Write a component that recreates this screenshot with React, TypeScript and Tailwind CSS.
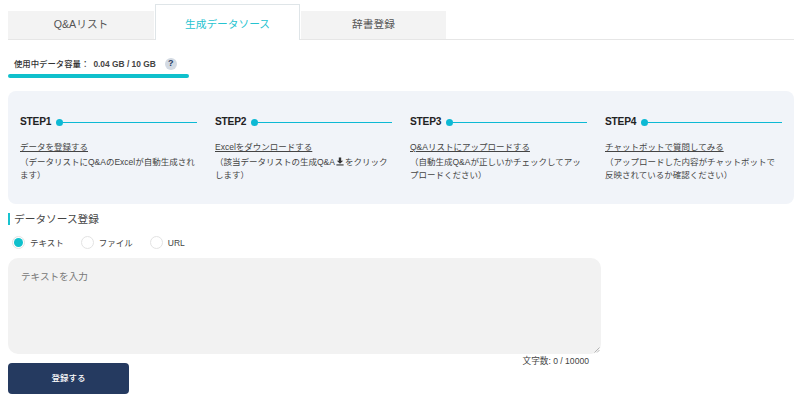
import React from "react";

const steps = [
  { n: "STEP1", t: "データを登録する", d: <>（データリストにQ&AのExcelが自動生成されます）</> },
  {
    n: "STEP2",
    t: "Excelをダウンロードする",
    d: (
      <>
        （該当データリストの生成Q&A
        <svg viewBox="0 0 10 10" className="inline-block w-[8px] h-[9px] align-[-1px] mx-px" fill="#333">
          <path d="M3.5 0h3v4h2.5L5 7.8 1 4h2.5z" />
          <rect x="0.5" y="8.6" width="9" height="1.4" />
        </svg>
        をクリックします）
      </>
    ),
  },
  { n: "STEP3", t: "Q&Aリストにアップロードする", d: <>（自動生成Q&Aが正しいかチェックしてアップロードください）</> },
  { n: "STEP4", t: "チャットボットで質問してみる", d: <>（アップロードした内容がチャットボットで反映されているか確認ください）</> },
];

function Radio({ label, checked }: { label: string; checked?: boolean }) {
  return (
    <div className="flex items-center gap-[5px]">
      <span className="w-[13px] h-[13px] rounded-full border border-[#e3e3e3] bg-white flex items-center justify-center shrink-0">
        {checked && <span className="w-[9px] h-[9px] rounded-full bg-[#0fc0cc]" />}
      </span>
      <span className="text-[8.5px] leading-[12px] text-[#444]">{label}</span>
    </div>
  );
}

export default function App() {
  return (
    <div
      className="w-[800px] h-[401px] overflow-hidden bg-white text-[#333] px-[8px]"
      style={{ fontFamily: '"Liberation Sans", "Noto Sans CJK JP", sans-serif' }}
    >
      <div className="w-[786px] h-[40px] flex items-end border-b border-[#e6e6e6]">
        <div className="w-[146px] h-[28px] pb-[2px] bg-[#f3f3f3] flex items-center justify-center text-[10.7px] text-[#555]">Q&Aリスト</div>
        <div className="w-[145px] h-[36px] pt-[4px] ml-px bg-white border border-[#dfe5e8] border-b-0 flex items-center justify-center text-[10.7px] text-[#26c3d0] -mb-px">生成データソース</div>
        <div className="w-[145px] h-[28px] pb-[2px] ml-px bg-[#f3f3f3] flex items-center justify-center text-[10.7px] text-[#555]">辞書登録</div>
      </div>

      <div className="w-[181px] mt-[14px] h-[24px] relative">
        <div className="flex items-center h-[20px] pl-[6px] text-[8.4px] font-medium text-[#333]">
          <span>使用中データ容量：</span>
          <span className="ml-[4px] font-bold text-[#444]">0.04 GB / 10 GB</span>
          <span className="ml-[9px] w-[12px] h-[12px] rounded-full bg-[#d3dae3] flex items-center justify-center text-[9px] font-bold text-[#2a3f66]">?</span>
        </div>
        <div className="absolute left-0 bottom-0 w-[181px] h-[4px] rounded-full bg-[#0fc0cc]" />
      </div>

      <div className="w-[786px] h-[113px] mt-[13px] rounded-[8px] bg-[#f1f4f9] pl-[12px] pt-[23px] grid grid-cols-[repeat(4,177px)] gap-x-[18px] content-start">
        {steps.map((s) => (
          <div key={s.n}>
            <div className="flex items-center h-[16px]">
              <span className="text-[10.2px] font-bold text-[#222] tracking-[-0.2px]">{s.n}</span>
              <span className="w-[7px] h-[7px] ml-[5px] rounded-full bg-[#0db9d4] shrink-0" />
              <span className="h-px flex-1 bg-[#0db9d4]" />
            </div>
            <div className="mt-[10px] text-[8.5px] leading-[14px] underline text-[#444]">{s.t}</div>
            <p className="mt-[2px] text-[8.5px] leading-[13px] text-[#444]">{s.d}</p>
          </div>
        ))}
      </div>

      <div className="mt-[8px] flex items-center h-[14px]">
        <span className="w-[2px] h-[12px] bg-[#18c3cf]" />
        <span className="ml-[4px] text-[10.7px] text-[#444]">データソース登録</span>
      </div>

      <div className="mt-[10px] pl-[4px] flex gap-[17px] h-[13px] items-center">
        <Radio label="テキスト" checked />
        <Radio label="ファイル" />
        <Radio label="URL" />
      </div>

      <div className="relative mt-[9px] w-[593px] h-[96px] rounded-[10px] bg-[#f2f2f2] px-[13px] py-[12px] text-[9.6px] leading-[14px] text-[#777]">
        テキストを入力
        <svg viewBox="0 0 6 6" className="absolute right-[1px] bottom-[1px] w-[6px] h-[6px]" stroke="#999" strokeWidth="0.7">
          <path d="M0.5 5.5 5.5 0.5M3 5.5 5.5 3" />
        </svg>
      </div>

      <div className="w-[581px] flex justify-between items-start">
        <button className="mt-[9px] w-[121px] h-[31px] rounded-[4px] bg-[#253a60] text-white text-[8.5px] font-medium">登録する</button>
        <span className="mt-[1px] text-[8.6px] leading-[13px] text-[#444]">文字数: 0 / 10000</span>
      </div>
    </div>
  );
}
